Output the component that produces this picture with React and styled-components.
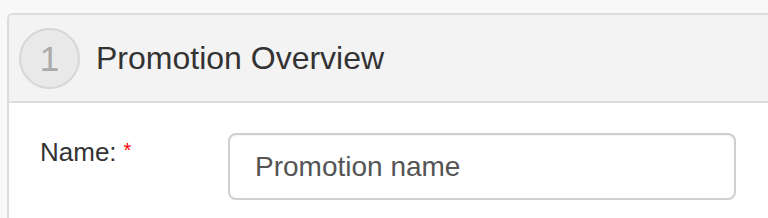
import React from "react";
import styled, { createGlobalStyle } from "styled-components";

const GlobalStyle = createGlobalStyle`
  html, body {
    margin: 0;
    padding: 0;
    background: #f8f8f8;
    overflow: hidden;
  }
  body {
    font-family: "Liberation Sans", Arial, Helvetica, sans-serif;
    color: #333;
  }
`;

const Panel = styled.section`
  margin: 13px 0 0 7px;
  border: 2px solid #dcdcdc;
  border-right: none;
  border-bottom: none;
  border-radius: 6px 0 0 0;
  background: #fff;
  overflow: hidden;
`;

const Header = styled.header`
  display: flex;
  align-items: center;
  gap: 16px;
  height: 86px;
  padding-left: 10px;
  background: #f3f3f3;
  border-bottom: 2px solid #dcdcdc;
`;

const StepCircle = styled.div`
  box-sizing: border-box;
  width: 61px;
  height: 61px;
  flex: none;
  border-radius: 50%;
  border: 2px solid #d6d6d6;
  background: #e9e9e9;
  color: #aaaaaa;
  font-size: 35px;
  line-height: 1;
  display: flex;
  align-items: center;
  justify-content: center;
`;

const Title = styled.h2`
  margin: 0;
  font-size: 32px;
  font-weight: 400;
  color: #333;
  line-height: 1;
`;

const Body = styled.div`
  display: flex;
  align-items: flex-start;
  padding: 30px 0 18px 31px;
`;

const Label = styled.label`
  width: 188px;
  flex: none;
  padding-top: 6px;
  font-size: 26px;
  line-height: 26px;
  color: #333;
`;

const Required = styled.span`
  color: #f00;
  font-size: 20px;
  vertical-align: top;
  margin-left: 7px;
  position: relative;
  top: -2px;
`;

const Input = styled.input`
  box-sizing: border-box;
  width: 508px;
  height: 67px;
  padding: 0 25px;
  border: 2px solid #cfcfcf;
  border-radius: 8px;
  background: #fff;
  box-shadow: inset 0 1px 2px rgba(0, 0, 0, 0.06);
  font-family: "Liberation Sans", Arial, Helvetica, sans-serif;
  font-size: 28px;
  color: #333;
  outline: none;
  &::placeholder {
    color: #555;
    opacity: 1;
  }
`;

export default function App() {
  return (
    <>
      <GlobalStyle />
      <Panel>
        <Header>
          <StepCircle>1</StepCircle>
          <Title>Promotion Overview</Title>
        </Header>
        <Body>
          <Label htmlFor="promo-name">
            Name:<Required>*</Required>
          </Label>
          <Input id="promo-name" placeholder="Promotion name" />
        </Body>
      </Panel>
    </>
  );
}
